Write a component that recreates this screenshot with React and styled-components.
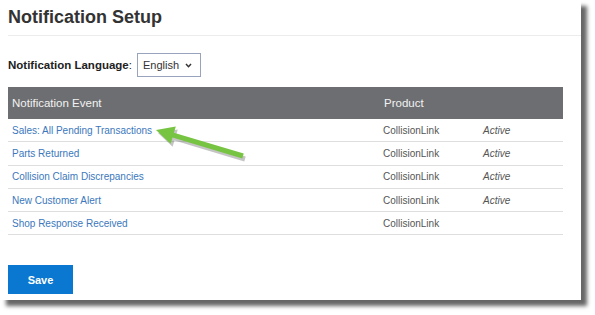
import styled, { createGlobalStyle } from 'styled-components';

const GlobalStyle = createGlobalStyle`
  html, body {
    margin: 0;
    padding: 0;
    background: #ffffff;
  }
  body {
    font-family: "Liberation Sans", Arial, sans-serif;
  }
`;

const Page = styled.div`
  width: 595px;
  height: 315px;
  overflow: hidden;
  background: #fff;
`;

const Panel = styled.div`
  position: relative;
  width: 581px;
  height: 300px;
  box-sizing: border-box;
  padding: 6px 0 0 8px;
  background: #fff;
  box-shadow: 6px 6px 4px rgba(0, 0, 0, 0.6);
  display: flex;
  flex-direction: column;
`;

const Title = styled.h1`
  margin: 0;
  font-size: 18px;
  line-height: 22px;
  font-weight: 700;
  color: #333;
  padding-bottom: 7px;
  border-bottom: 1px solid #ececec;
`;

const LanguageRow = styled.div`
  display: flex;
  align-items: center;
  gap: 5px;
  margin-top: 17px;
  height: 24px;
  font-size: 11.5px;
  color: #222;

  b {
    font-weight: 700;
  }
`;

const Select = styled.div`
  width: 64px;
  height: 24px;
  box-sizing: border-box;
  border: 1px solid #9aa3bd;
  display: flex;
  align-items: center;
  justify-content: space-between;
  padding: 0 8px 0 5px;
  font-size: 11px;
  color: #333;
`;

const Table = styled.div`
  margin-top: 10px;
  width: 555px;
`;

const Row = styled.div`
  display: grid;
  grid-template-columns: 372px 100px 1fr;
  align-items: center;
  box-sizing: border-box;
  height: ${(p) => (p.$head ? '32px' : '23.3px')};
  background: ${(p) => (p.$head ? '#6d6e71' : '#fff')};
  border-bottom: ${(p) => (p.$head ? 'none' : '1px solid #dedede')};
`;

const HeadCell = styled.div`
  padding-left: 4px;
  font-size: 11.5px;
  color: #f2f2f2;
`;

const Cell = styled.div`
  padding-left: ${(p) => (p.$link ? '4px' : '3px')};
  font-size: 10px;
  color: ${(p) => (p.$link ? '#3b78bd' : '#555')};
  font-style: ${(p) => (p.$italic ? 'italic' : 'normal')};
  white-space: nowrap;
`;

const SaveButton = styled.button`
  margin-top: 30px;
  width: 65px;
  height: 29px;
  border: none;
  background: #0a78d1;
  color: #fff;
  font-family: "Liberation Sans", Arial, sans-serif;
  font-weight: 700;
  font-size: 11px;
  padding: 0;
`;

const Arrow = styled.svg`
  position: absolute;
  left: 0;
  top: 0;
  pointer-events: none;
`;

const rows = [
  { event: 'Sales: All Pending Transactions', status: 'Active' },
  { event: 'Parts Returned', status: 'Active' },
  { event: 'Collision Claim Discrepancies', status: 'Active' },
  { event: 'New Customer Alert', status: 'Active' },
  { event: 'Shop Response Received', status: '' },
];

const arrowPoints =
  '156,130 175.8,126.5 173.9,132.7 243.7,153.6 242.3,158.4 172.5,137.5 170.6,143.7';

export default function App() {
  return (
    <Page>
      <GlobalStyle />
      <Panel>
        <Title>Notification Setup</Title>
        <LanguageRow>
          <span>
            <b>Notification Language</b>:
          </span>
          <Select>
            <span>English</span>
            <svg width="7" height="5" viewBox="0 0 7 5">
              <path d="M1 1 L3.5 3.7 L6 1" fill="none" stroke="#333" strokeWidth="1.5" />
            </svg>
          </Select>
        </LanguageRow>
        <Table>
          <Row $head>
            <HeadCell>Notification Event</HeadCell>
            <HeadCell>Product</HeadCell>
            <HeadCell />
          </Row>
          {rows.map((r) => (
            <Row key={r.event}>
              <Cell $link>{r.event}</Cell>
              <Cell>CollisionLink</Cell>
              <Cell $italic>{r.status}</Cell>
            </Row>
          ))}
        </Table>
        <SaveButton>Save</SaveButton>
        <Arrow width="581" height="300" viewBox="0 0 581 300">
          <polygon points={arrowPoints} fill="#555" opacity="0.35" transform="translate(2 3)" />
          <polygon points={arrowPoints} fill="#77c443" />
        </Arrow>
      </Panel>
    </Page>
  );
}
